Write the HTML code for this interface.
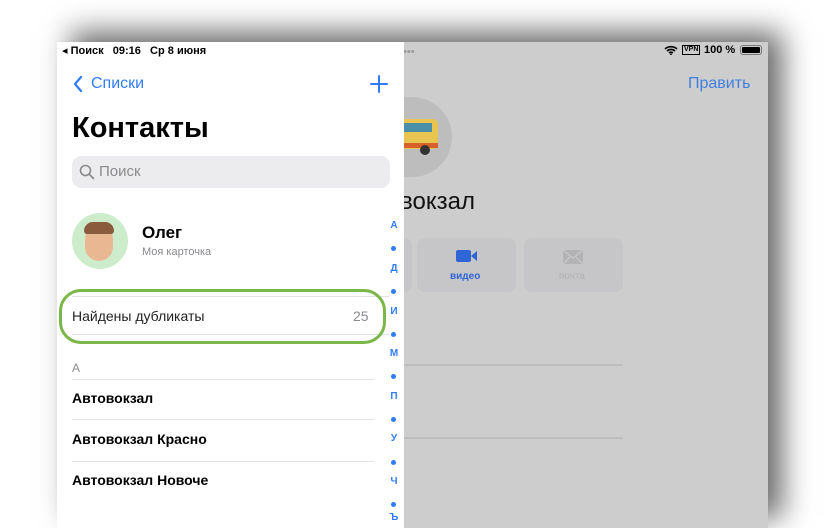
<!DOCTYPE html>
<html style="overflow:hidden;width:830px;height:528px"><head><meta charset="utf-8"><style>
*{margin:0;padding:0;box-sizing:border-box}
body{width:830px;height:528px;background:#fff;overflow:hidden;position:relative;font-family:"Liberation Sans","DejaVu Sans",sans-serif}
.scr{position:absolute;left:57px;top:42px;width:711px;height:486px;background:#cdcdcd;box-shadow:14px -10px 28px rgba(0,0,0,.6)}
.left{position:absolute;left:0;top:0;width:347px;height:100%;background:#fff}
.a{position:absolute;white-space:nowrap}
.blue{color:#2f7cf6}
.sep{position:absolute;height:1px;background:#e2e2e4}
.idx{position:absolute;left:331px;width:12px;text-align:center;font-size:10px;color:#2f7cf6;font-weight:bold}
.dot{position:absolute;left:334px;width:5px;height:5px;border-radius:50%;background:#2f7cf6}
</style></head><body>
<div class="scr">
 <div class="a" style="left:346px;top:4px;font-size:11px;color:#999">•••</div>
 <svg class="a" style="left:607px;top:3px" width="14" height="10" viewBox="0 0 14 10"><path d="M1 4a9 9 0 0 1 12 0M3 6a6 6 0 0 1 8 0M5 8a3 3 0 0 1 4 0" stroke="#000" stroke-width="1.6" fill="none"/><circle cx="7" cy="9.3" r=".9"/></svg>
 <div class="a" style="left:625px;top:3px;border:1px solid #000;font-size:7px;padding:0 1px;line-height:8px;font-weight:bold">VPN</div>
 <div class="a" style="left:647px;top:2px;font-size:11px;font-weight:bold">100 %</div>
 <div class="a" style="left:683px;top:3px;width:22px;height:10px;border:1px solid #777;border-radius:3px;padding:1px"><div style="width:100%;height:100%;background:#000;border-radius:1px"></div></div>
 <div class="a" style="left:631px;top:33px;font-size:16px;color:#3f7fe0">Править</div>
 <div class="a" style="left:345px;top:55px;width:50px;height:80px;border-radius:0 40px 40px 0;background:#bdbdbd;overflow:hidden">
   <div style="position:absolute;left:0;top:22px;width:36px;height:30px;background:#e8c450;border-radius:0 5px 5px 0"></div>
   <div style="position:absolute;left:0;top:26px;width:30px;height:9px;background:#4a8fa6"></div>
   <div style="position:absolute;left:0;top:46px;width:36px;height:5px;background:#d8602a"></div>
   <div style="position:absolute;left:18px;top:48px;width:10px;height:10px;border-radius:50%;background:#333"></div>
 </div>
 <div class="a" style="left:343px;top:146px;font-size:24px;color:#111">вокзал</div>
 <div class="a" style="left:360px;top:196px;width:99px;height:54px;background:#c6c6c8;border-radius:8px"></div>
 <div class="a" style="left:467px;top:196px;width:99px;height:54px;background:#c6c6c8;border-radius:8px"></div>
 <div class="a" style="left:347px;top:196px;width:8px;height:54px;background:#c6c6c8;border-radius:0 8px 8px 0"></div>
 <div class="a" style="left:399px;top:208px;width:15px;height:12px;background:#2e64d4;border-radius:2px"></div>
 <div class="a" style="left:414px;top:209px;width:0;height:0;border-top:5px solid transparent;border-bottom:5px solid transparent;border-right:6px solid #2e64d4"></div>
 <div class="a" style="left:393px;top:229px;font-size:10px;color:#2e64d4;font-weight:bold">видео</div>
 <svg class="a" style="left:506px;top:208px" width="20" height="14"><rect width="20" height="14" fill="#b3b3b5"/><path d="M0 0l10 8 10-8M0 14l7-7M20 14l-7-7" stroke="#c6c6c8" stroke-width="1.3" fill="none"/></svg>
 <div class="a" style="left:502px;top:229px;font-size:10px;color:#b0b0b2">почта</div>
 <div class="a" style="left:347px;top:322px;width:219px;height:2px;background:#bdbdbd"></div>
 <div class="a" style="left:347px;top:395px;width:219px;height:2px;background:#bdbdbd"></div>

 <div class="left">
  <div class="a" style="left:5px;top:2px;font-size:11px;font-weight:bold">◂ Поиск&nbsp;&nbsp;&nbsp;09:16&nbsp;&nbsp;&nbsp;Ср 8 июня</div>
  <svg class="a" style="left:16px;top:33px" width="10" height="18"><path d="M8 2L2 9l6 7" stroke="#2f7cf6" stroke-width="2.2" fill="none" stroke-linecap="round" stroke-linejoin="round"/></svg>
  <div class="a blue" style="left:34px;top:33px;font-size:16px">Списки</div>
  <svg class="a" style="left:313px;top:33px" width="18" height="18"><path d="M9 1v16M1 9h16" stroke="#2f7cf6" stroke-width="2" stroke-linecap="round"/></svg>
  <div class="a" style="left:15px;top:70px;font-size:29px;font-weight:bold;color:#000">Контакты</div>
  <div class="a" style="left:15px;top:114px;width:318px;height:32px;background:#ececee;border-radius:9px"></div>
  <svg class="a" style="left:22px;top:122px" width="16" height="16"><circle cx="6.5" cy="6.5" r="5" stroke="#8a8a8e" stroke-width="1.6" fill="none"/><path d="M10 10l4.5 4.5" stroke="#8a8a8e" stroke-width="1.8" stroke-linecap="round"/></svg>
  <div class="a" style="left:42px;top:121px;font-size:15px;color:#8a8a8e">Поиск</div>
  <div class="a" style="left:15px;top:171px;width:56px;height:56px;border-radius:50%;background:#cdeccc;overflow:hidden">
    <div style="position:absolute;left:13px;top:12px;width:28px;height:36px;border-radius:14px;background:#eab793"></div>
    <div style="position:absolute;left:12px;top:9px;width:30px;height:12px;border-radius:12px 12px 4px 4px;background:#8a5b3c"></div>
  </div>
  <div class="a" style="left:85px;top:181px;font-size:17px;font-weight:bold">Олег</div>
  <div class="a" style="left:85px;top:204px;font-size:11px;color:#8a8a8e">Моя карточка</div>
  <div class="sep" style="left:15px;top:254px;width:317px"></div>
  <div class="a" style="left:15px;top:266px;font-size:14px;color:#222">Найдены дубликаты</div>
  <div class="a" style="left:296px;top:266px;font-size:14px;color:#8a8a8e">25</div>
  <div class="sep" style="left:15px;top:292px;width:317px"></div>
  <div class="a" style="left:2px;top:247px;width:327px;height:55px;border:3px solid #7ab648;border-radius:22px"></div>
  <div class="a" style="left:15px;top:319px;font-size:12px;color:#8a8a8e">А</div>
  <div class="sep" style="left:15px;top:337px;width:302px"></div>
  <div class="a" style="left:15px;top:348px;font-size:14px;font-weight:bold">Автовокзал</div>
  <div class="sep" style="left:15px;top:377px;width:302px"></div>
  <div class="a" style="left:15px;top:389px;font-size:14px;font-weight:bold">Автовокзал Красно</div>
  <div class="sep" style="left:15px;top:419px;width:302px"></div>
  <div class="a" style="left:15px;top:430px;font-size:14px;font-weight:bold">Автовокзал Новоче</div>
  <div class="idx" style="top:178px">А</div><div class="dot" style="top:204px"></div>
  <div class="idx" style="top:221px">Д</div><div class="dot" style="top:247px"></div>
  <div class="idx" style="top:264px">И</div><div class="dot" style="top:290px"></div>
  <div class="idx" style="top:306px">М</div><div class="dot" style="top:332px"></div>
  <div class="idx" style="top:349px">П</div><div class="dot" style="top:375px"></div>
  <div class="idx" style="top:391px">У</div><div class="dot" style="top:418px"></div>
  <div class="idx" style="top:434px">Ч</div><div class="dot" style="top:460px"></div>
  <div class="idx" style="top:470px">Ъ</div>
 </div>
</div>
</body></html>
